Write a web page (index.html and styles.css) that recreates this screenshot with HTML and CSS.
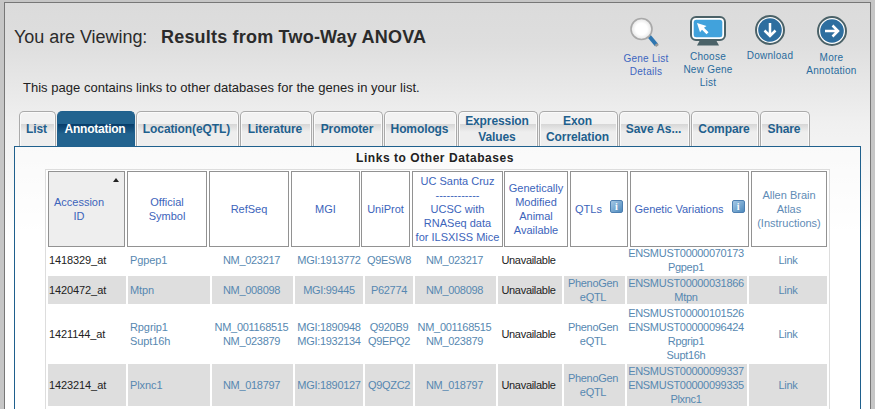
FILE: index.html
```html
<!DOCTYPE html>
<html lang="en">
<head>
<meta charset="utf-8">
<title>Results from Two-Way ANOVA</title>
<link rel="stylesheet" href="styles.css">
</head>
<body>
<main class="panel">
  <header class="top">
    <div class="heading">
      <h1><span class="label">You are Viewing:</span><span class="name">Results from Two-Way ANOVA</span></h1>
      <p>This page contains links to other databases for the genes in your list.</p>
    </div>
    <nav class="tools">
      <a class="tool details">
        <svg width="34" height="34" viewBox="0 0 34 34"><defs><radialGradient id="lens"><stop offset=".55" stop-color="#fff"/><stop offset="1" stop-color="#e4e4e4"/></radialGradient></defs><path d="M20 20l7.500 9" stroke="#2e76b0" stroke-width="4"/><path d="M27 28l1.500 2" stroke="#999" stroke-width="3.500"/><circle cx="12.500" cy="13" r="10.500" fill="url(#lens)" stroke="#a9a9a9" stroke-width="1.600"/></svg>
        <span>Gene List<br>Details</span></a>
      <a class="tool choose">
        <svg width="38" height="32" viewBox="0 0 38 32"><path d="M11 25h16l3 5.500H8z" fill="#4b6268"/><rect x="2" y="2" width="34" height="23" rx="5" fill="#fff" stroke="#4b6268" stroke-width="2"/><rect x="4.700" y="4.700" width="28.600" height="17.600" rx="2.500" fill="#41a2dc"/><path d="M8 8l9.500 3-2.500 1.800 4.500 4.500-2 2-4.500-4.500-2 2.500z" fill="#fff"/></svg>
        <span>Choose<br>New Gene<br>List</span></a>
      <a class="tool download">
        <svg width="32" height="32" viewBox="0 0 32 32"><circle cx="16" cy="16" r="14" fill="#fff" stroke="#4b6268" stroke-width="2"/><circle cx="16" cy="16" r="11.800" fill="#2d6e9f"/><path d="M16 9v13M10.500 16.500L16 22l5.500-5.500" fill="none" stroke="#fff" stroke-width="2.500"/></svg>
        <span>Download</span></a>
      <a class="tool more">
        <svg width="32" height="32" viewBox="0 0 32 32"><circle cx="16" cy="16" r="14" fill="#fff" stroke="#4b6268" stroke-width="2"/><circle cx="16" cy="16" r="11.800" fill="#2d6e9f"/><path d="M9 16h13M16.500 10.500L22 16l-5.500 5.500" fill="none" stroke="#fff" stroke-width="2.500"/></svg>
        <span>More<br>Annotation</span></a>
    </nav>
  </header>
  <nav class="tabs">
    <a>List</a><a class="active">Annotation</a><a>Location(eQTL)</a><a>Literature</a><a>Promoter</a><a>Homologs</a><a>Expression<br>Values</a><a>Exon<br>Correlation</a><a>Save As...</a><a>Compare</a><a>Share</a>
  </nav>
  <section class="box">
    <h2>Links to Other Databases</h2>
    <div class="table">
      <div class="head">
        <div class="sorted"><span>Accession<br>ID</span></div><div>Official<br>Symbol</div><div>RefSeq</div><div>MGI</div><div>UniProt</div><div>UC Santa Cruz<br>------------<br>UCSC with<br>RNASeq data<br>for ILSXISS Mice</div><div>Genetically<br>Modified<br>Animal<br>Available</div><div class="info"><span>QTLs</span><i>i</i></div><div class="info"><span>Genetic Variations</span><i>i</i></div><div class="soft">Allen Brain<br>Atlas<br>(Instructions)</div>
      </div>
      <div class="row first"><div>1418329_at</div><div>Pgpep1</div><div>NM_023217</div><div>MGI:1913772</div><div>Q9ESW8</div><div>NM_023217</div><div>Unavailable</div><div></div><div>ENSMUST00000070173<br>Pgpep1</div><div>Link</div></div>
      <div class="row alt"><div>1420472_at</div><div>Mtpn</div><div>NM_008098</div><div>MGI:99445</div><div>P62774</div><div>NM_008098</div><div>Unavailable</div><div>PhenoGen<br>eQTL</div><div>ENSMUST00000031866<br>Mtpn</div><div>Link</div></div>
      <div class="row"><div>1421144_at</div><div>Rpgrip1<br>Supt16h</div><div>NM_001168515<br>NM_023879</div><div>MGI:1890948<br>MGI:1932134</div><div>Q920B9<br>Q9EPQ2</div><div>NM_001168515<br>NM_023879</div><div>Unavailable</div><div>PhenoGen<br>eQTL</div><div>ENSMUST00000101526<br>ENSMUST00000096424<br>Rpgrip1<br>Supt16h</div><div>Link</div></div>
      <div class="row alt"><div>1423214_at</div><div>Plxnc1</div><div>NM_018797</div><div>MGI:1890127</div><div>Q9QZC2</div><div>NM_018797</div><div>Unavailable</div><div>PhenoGen<br>eQTL</div><div>ENSMUST00000099337<br>ENSMUST00000099335<br>Plxnc1</div><div>Link</div></div>
    </div>
  </section>
</main>
</body>
</html>
```
FILE: styles.css
```css
* { box-sizing: border-box; }
html, body { height: 100%; }
body {
  margin: 0;
  padding: 2px 4px 0;
  overflow: hidden;
  background: #c6c6c6;
  color: #222;
  font: 11px/14px "Liberation Sans", Arial, sans-serif;
}
.panel {
  width: 867px;
  height: 420px;
  border: 1px solid #777;
  background: linear-gradient(#dbdbdb 0, #dedede 40px, #e8e8e8 85px, #f0f0f0 120px, #fff 235px);
}
.top { display: flex; height: 108px; }
.heading { width: 610px; padding: 22px 0 0 9px; }
h1 { margin: 0; font-size: 18px; line-height: 24px; font-weight: normal; color: #2b2b2b; white-space: nowrap; }
h1 .label { display: inline-block; width: 147px; letter-spacing: -.05px; }
h1 .name { font-weight: bold; letter-spacing: .2px; }
p { margin: 27px 0 0 9px; font-size: 13px; line-height: 24px; letter-spacing: .02px; white-space: nowrap; }
.tools { display: flex; font-size: 10px; line-height: 13px; letter-spacing: .25px; color: #286b9d; text-align: center; }
.tool { display: flex; flex-direction: column; align-items: center; width: 62px; }
.details { color: #3d66c0; padding-top: 13px; }
.details span { margin-top: 2px; }
.choose { padding-top: 12px; }
.choose span { margin-top: 3px; }
.download { padding-top: 11px; }
.download span { margin-top: 3px; }
.more { width: 61px; padding-top: 12px; }
.more span { margin-top: 4px; }
.tabs { display: grid; grid-template-columns: 37px 78px 103px 72px 70px 73px 80px 79px 71px 68px 50px; column-gap: 1px; height: 35px; margin-left: 14px; }
.tabs a {
  display: flex; align-items: center; justify-content: center;
  height: 35px; padding-right: 2px;
  border: 1px solid #aaa; border-bottom: 0; border-radius: 5px 5px 0 0;
  background: linear-gradient(#f2f2f2 0 12px, #d6d6d6 12px, #eee 20px);
  box-shadow: inset 1px 1px #fafafa, inset -1px 0 #fafafa;
  color: #1f608d; font-size: 12px; line-height: 16px; font-weight: bold; letter-spacing: -.1px; text-align: center;
}
.tabs .active { background: linear-gradient(#22638f 0 12px, #073c69 12px, #22638f 22px); border-color: #1f608d; box-shadow: none; color: #fff; letter-spacing: -.25px; }
.box { width: 847px; height: 280px; margin-left: 9px; border: 1px solid #1f608d; background: rgba(255,255,255,.5); }
h2 { height: 22px; margin: 0 0 0 -5px; font-size: 12px; line-height: 22px; letter-spacing: .55px; text-align: center; color: #222; }
.table { width: 785px; height: 260px; margin-left: 30px; padding: 1px 2px 0; border: 1px solid #ddd; background: #fff; }
.head { display: grid; grid-template-columns: 79px 82px 82px 70px 51px 92px 66px 60px 121px 78px; height: 76px; color: #3c64bb; text-align: center; }
.head > div { display: flex; align-items: center; justify-content: center; margin-right: 2px; border: 1px solid #929292; white-space: nowrap; }
.head > div:nth-child(4), .head > div:nth-child(6) { margin-right: 1px; }
.head .sorted { position: relative; padding-right: 15px; background: #eee; }
.sorted::after { content: ""; position: absolute; right: 5px; top: 6px; border: 3.500px solid transparent; border-top: 0; border-bottom: 4px solid #222; }
.head .info { gap: 8px; }
.info i { width: 13px; height: 13px; border: 1px solid #4d7fb1; border-radius: 2px; background: linear-gradient(135deg, #a5c8e5, #4e8abd); color: #fff; font: bold 10px/11px "Liberation Serif", serif; margin-top: -5px; }
.head .soft { color: #5f8cb6; }
.row { display: grid; grid-template-columns: 78px 82px 81px 68px 48px 81px 64px 61px 120px 78px; column-gap: 2px; margin-bottom: 2px; color: #5788b1; text-align: center; letter-spacing: -.3px; }
.first { margin-top: -1px; }
.row > div { display: flex; align-items: center; justify-content: center; white-space: nowrap; }
.row > div:first-child { justify-content: flex-start; padding-left: 1px; color: #222; letter-spacing: -.1px; }
.row > div:nth-child(2) { justify-content: flex-start; padding-left: 2px; text-align: left; letter-spacing: -.1px; }
.row > div:nth-child(3), .row > div:nth-child(6) { padding-right: 2px; }
.row > div:nth-child(7) { padding-right: 3px; color: #222; }
.row > div:nth-child(8) { padding-right: 3px; }
.row > div:nth-child(9) { padding-right: 2px; }
.alt > div { background: #dedede; }
```
